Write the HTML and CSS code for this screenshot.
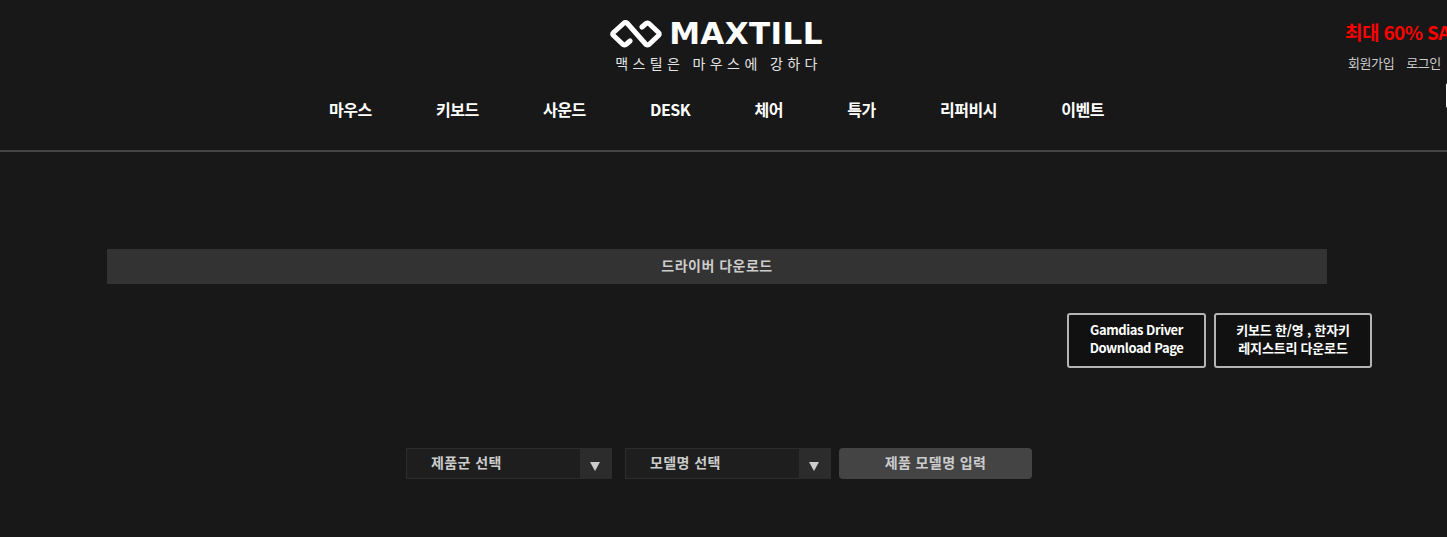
FILE: index.html
```html
<!DOCTYPE html>
<html lang="ko">
<head>
    <meta charset="UTF-8">
    <meta name="viewport" content="width=device-width, initial-scale=1.0">
    <title>드라이버 다운로드 - MAXTILL</title>
    <link rel="stylesheet" href="styles.css">
</head>
<body>
    <div class="page">
        <header class="header">
            <a class="logo" href="#">
                <svg class="logo-mark" width="52" height="28" viewBox="0 0 52 28" fill="none" stroke="#fff" stroke-width="5" stroke-linecap="round" stroke-linejoin="round">
                    <path d="M20 21 L16 24.5 Q14.5 25.5 13 24.5 L3.5 15.5 Q2 14 3.5 12.5 L14 3 Q15.5 2 17 3 L36 24.5 Q37.5 25.5 39 24.5 L48.5 15.5 Q50 14 48.5 12.5 L39 3.5 Q37.5 2.5 36 3.5 L32 7"/>
                </svg>
                <span class="logo-text">MAXTILL</span>
            </a>
            <p class="tagline">맥스틸은 마우스에 강하다</p>
            <nav class="gnb">
                <a href="#">마우스</a>
                <a href="#">키보드</a>
                <a href="#">사운드</a>
                <a href="#">DESK</a>
                <a href="#">체어</a>
                <a href="#">특가</a>
                <a href="#">리퍼비시</a>
                <a href="#">이벤트</a>
            </nav>
            <div class="util">
                <strong class="sale">최대 60% SALE</strong>
                <div class="util-links">
                    <a href="#">회원가입</a>
                    <a href="#">로그인</a>
                </div>
                <div class="search-box"></div>
            </div>
        </header>

        <main class="content">
            <h2 class="title-bar">드라이버 다운로드</h2>
            <div class="link-btns">
                <a class="link-btn link-btn-a" href="#">Gamdias Driver<br>Download Page</a>
                <a class="link-btn link-btn-b" href="#">키보드 한/영 , 한자키<br>레지스트리 다운로드</a>
            </div>
            <form class="finder">
                <div class="select-box">
                    <span>제품군 선택</span>
                    <i class="arrow"></i>
                </div>
                <div class="select-box">
                    <span>모델명 선택</span>
                    <i class="arrow"></i>
                </div>
                <button class="model-btn" type="button">제품 모델명 입력</button>
            </form>
        </main>
    </div>
</body>
</html>
```

FILE: styles.css
```css
html, body {
    margin: 0;
    height: 537px;
    overflow: hidden;
    background-color: #181818;
}

body {
    font-family: "Noto Sans CJK KR", "Noto Sans", sans-serif;
    color: #fff;
}

a {
    color: inherit;
    text-decoration: none;
}

.header {
    position: relative;
    height: 150px;
    padding-right: 14px;
    border-bottom: 2px solid #444;
    display: flex;
    flex-direction: column;
    align-items: center;
}

.logo {
    display: flex;
    align-items: center;
    gap: 7px;
    margin-top: 19px;
    height: 29px;
}

.logo-text {
    font-family: "DejaVu Sans", sans-serif;
    font-size: 31px;
    font-weight: bold;
    line-height: 29px;
    letter-spacing: 0.4px;
}

.tagline {
    margin: 5px 0 0;
    padding-left: 4px;
    font-size: 14px;
    line-height: 20px;
    letter-spacing: 4.4px;
    color: #e4e4e4;
}

.gnb {
    display: flex;
    gap: 64.3px;
    margin-top: 25px;
    font-size: 16px;
    font-weight: bold;
    line-height: 22px;
    letter-spacing: -0.5px;
}

.util {
    position: absolute;
    left: 1345px;
    top: 18px;
    width: 200px;
}

.sale {
    display: block;
    color: #f00;
    font-size: 19px;
    line-height: 28px;
    letter-spacing: -0.6px;
}

.util-links {
    display: flex;
    gap: 12px;
    margin: 7px 0 0 3px;
    color: #ccc;
    font-size: 13px;
    line-height: 20px;
    letter-spacing: -0.4px;
}

.search-box {
    width: 40px;
    height: 25px;
    margin: 10px 0 0 101px;
    background-color: #fff;
    border-radius: 2px;
}

.content {
    padding-top: 97px;
}

.title-bar {
    width: 1220px;
    height: 35px;
    margin: 0 0 0 107px;
    background-color: #333;
    color: #ccc;
    font-size: 14px;
    font-weight: bold;
    line-height: 32px;
    letter-spacing: 0.5px;
    text-align: center;
}

.link-btns {
    display: flex;
    gap: 8px;
    margin: 29px 0 0 1067px;
}

.link-btn {
    box-sizing: border-box;
    height: 55px;
    padding-top: 6px;
    border: 2px solid #b4b4b4;
    border-radius: 3px;
    background-color: #111;
    font-size: 13px;
    font-weight: bold;
    line-height: 18px;
    text-align: center;
}

.link-btn-a {
    width: 139px;
    letter-spacing: -0.45px;
}

.link-btn-b {
    width: 158px;
    letter-spacing: -0.2px;
}

.finder {
    display: flex;
    margin: 80px 0 0 406px;
}

.select-box {
    box-sizing: border-box;
    position: relative;
    width: 206px;
    height: 31px;
    margin-right: 13px;
    padding-left: 24px;
    border: 1px solid #2c2c2c;
    background-color: #1e1e1e;
    color: #ccc;
    font-size: 14px;
    font-weight: bold;
    line-height: 27px;
    letter-spacing: 0.4px;
}

.arrow {
    position: absolute;
    right: -1px;
    top: -1px;
    width: 32px;
    height: 31px;
    background-color: #2c2c2c;
}

.arrow::after {
    content: "";
    position: absolute;
    left: 10px;
    top: 14px;
    border-left: 5.5px solid transparent;
    border-right: 5.5px solid transparent;
    border-top: 9px solid #ccc;
}

.model-btn {
    width: 193px;
    height: 31px;
    margin-left: -5px;
    padding: 0 0 3px;
    border: none;
    border-radius: 4px;
    background-color: #444;
    color: #ccc;
    font-family: inherit;
    font-size: 14px;
    font-weight: bold;
    letter-spacing: 0.4px;
}
```
